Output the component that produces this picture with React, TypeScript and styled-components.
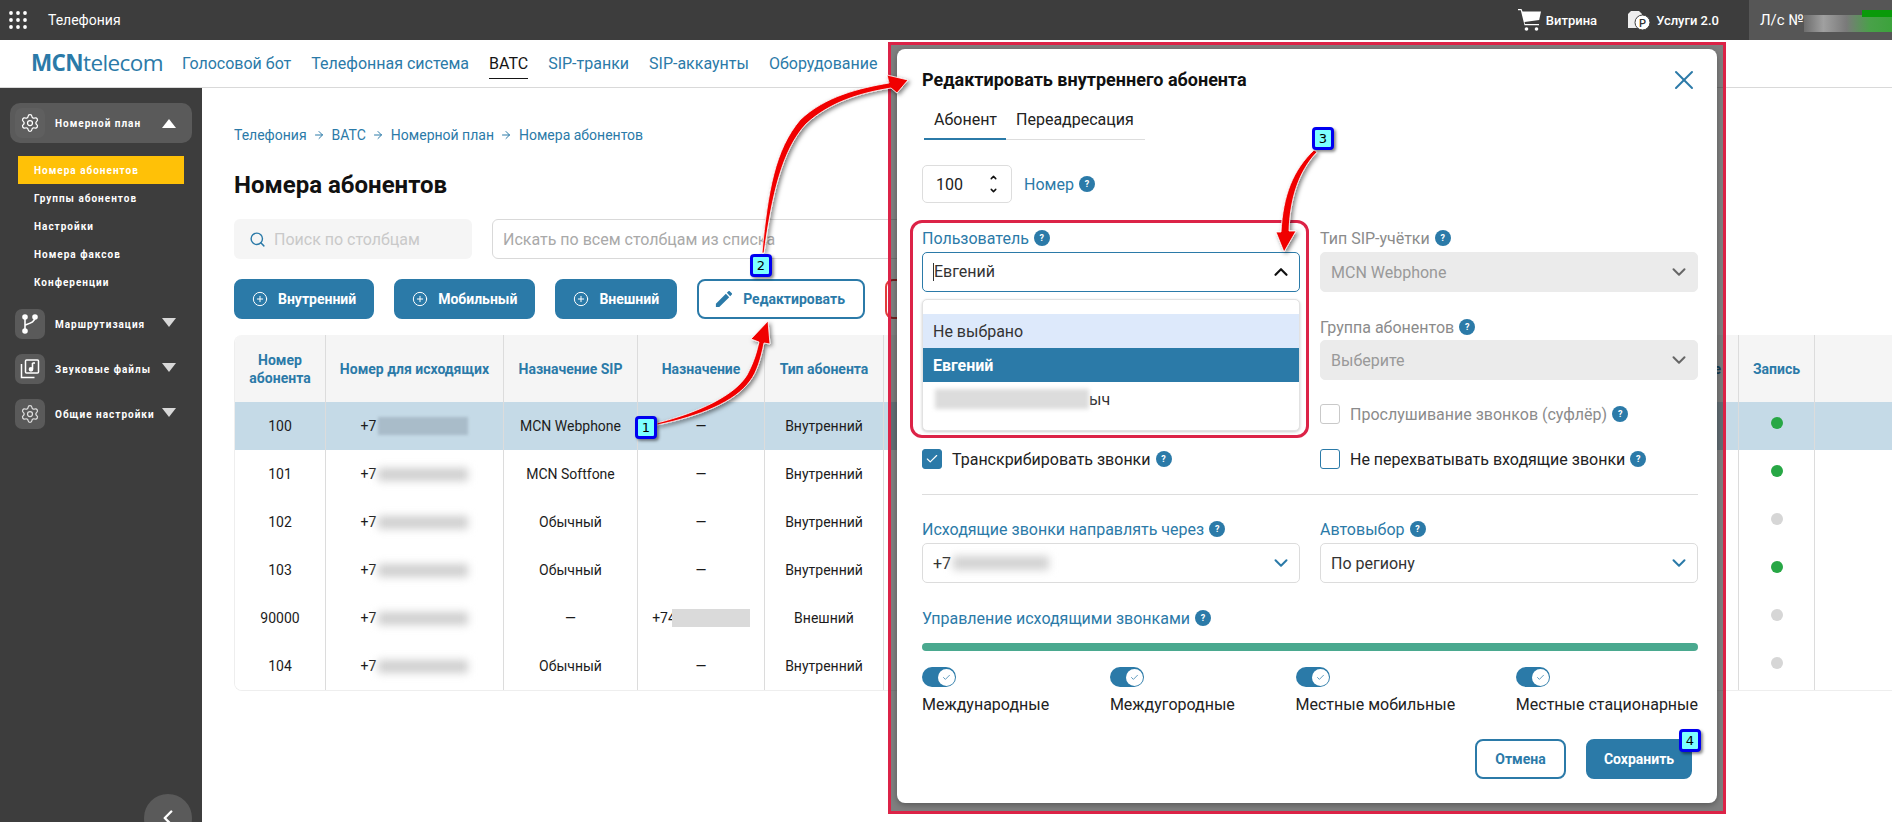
import React from "react";
import styled, { createGlobalStyle } from "styled-components";
import { ArrowRight, Check, ChevronDown, ChevronLeft, ChevronUp, CirclePlus, Search, Settings, X } from "lucide-react";

const BLUE = "#2b7aa8";
const COLS = "91px 178px 134px 127px 119px 855px 76px 1fr";

const Global = createGlobalStyle`
  html, body { margin: 0; padding: 0; background: #fff; overflow: hidden; }
  * { box-sizing: border-box; }
  body { font-family: Roboto, "Liberation Sans", sans-serif; color: #1c1c1c; }
`;

const Page = styled.div`
  position: relative; width: 1892px; height: 822px; overflow: hidden;
  display: flex; flex-direction: column;
`;
const TopBar = styled.header`
  height: 40px; background: #3d3d3d; color: #fff; display: flex; align-items: center; flex: none;
`;
const AppGrid = styled.svg`margin: 0 21px 0 9px; display: block;`;
const AppTitle = styled.span`font-size: 14px; margin-right: auto;`;
const TopLink = styled.span`
  display: flex; align-items: center; gap: 5px; font-size: 13px; font-weight: 500; margin-right: 30px;
`;
const Account = styled.div`
  width: 143px; flex: none; height: 40px; background: #565656; display: flex; align-items: center;
  padding-left: 11px; font-size: 15px; gap: 0;
`;
const AccountBlur = styled.span`
  position: relative; display: block; flex: 1; height: 17px; margin-top: 7px;
  background: linear-gradient(90deg,#6d6d6d,#a0a0a0 22%,#7a7a7a 48%,#49a149 75%,#3ca33c);
  &::before { content: ""; position: absolute; left: 58px; right: 0; top: -5px; height: 7px; background: #0a9a0a; }
`;
const NavBar = styled.nav`
  height: 48px; flex: none; display: flex; align-items: flex-start; gap: 20px; padding: 14px 0 0 31px;
  border-bottom: 1px solid #d9d9d9; background: #fff;
`;
const Logo = styled.div`
  width: 131px; margin-top: -5px; font-family: "Open Sans", sans-serif; font-size: 22.5px; line-height: 28px; color: ${BLUE};
  letter-spacing: -0.6px; white-space: nowrap;
  b { font-weight: 700; } 
`;
const NavItem = styled.span<{ $active?: boolean }>`
  font-size: 16px; line-height: 20px; padding-bottom: 4px; white-space: nowrap;
  color: ${p => (p.$active ? "#151515" : BLUE)};
  border-bottom: 1px solid ${p => (p.$active ? "#151515" : "transparent")};
`;
const Content = styled.div`flex: 1; display: flex; min-height: 0;`;
const Sidebar = styled.aside`
  position: relative; width: 202px; flex: none; background: #3d3d3d; padding: 15px 10px 0;
  display: flex; flex-direction: column; color: #fff;
`;
const MenuGroup = styled.div<{ $open?: boolean }>`
  display: flex; align-items: center; height: ${p => (p.$open ? "40px" : "30px")}; padding-left: 5px; border-radius: 10px;
  background: ${p => (p.$open ? "#5a5a5a" : "transparent")}; margin-bottom: ${p => (p.$open ? "13px" : "15px")};
`;
const IconBox = styled.span<{ $open?: boolean }>`
  width: 30px; height: 30px; flex: none; border-radius: 7px; display: flex; align-items: center; justify-content: center;
  background: ${p => (p.$open ? "#5f5f5f" : "#5a5a5a")};
`;
const MenuText = styled.span`
  margin-left: 10px; flex: 1; font-size: 10px; font-weight: 700; letter-spacing: 1px; white-space: nowrap; line-height: 14px; padding-top: 2px;
`;
const Triangle = styled.span<{ $up?: boolean }>`
  width: 0; height: 0; margin-right: 16px; flex: none;
  border-left: 7px solid transparent; border-right: 7px solid transparent;
  ${p => (p.$up ? "border-bottom: 9px solid #fff;" : "border-top: 9px solid #d8d8d8; margin-top: -4px;")}
`;
const SubList = styled.div`margin: 0 8px 13px; display: flex; flex-direction: column;`;
const SubItem = styled.div<{ $active?: boolean }>`
  height: 28px; display: flex; align-items: center; padding-left: 16px; font-size: 10px; font-weight: 700; letter-spacing: 1px;
  background: ${p => (p.$active ? "#ffc107" : "transparent")};
`;
const Collapse = styled.div`
  position: absolute; left: 144px; top: 706px; width: 48px; height: 48px; border-radius: 50%; background: #5a5a5a;
  display: flex; align-items: center; justify-content: center;
`;
const Main = styled.main`flex: 1; min-width: 0; padding: 37px 0 0 32px;`;
const Crumbs = styled.div`display: flex; align-items: center; font-size: 14px; line-height: 20px; color: ${BLUE}; gap: 6.5px;`;
const Title = styled.h1`margin: 26px 0 20px; font-size: 24px; line-height: 28px; font-weight: 700; color: #111;`;
const SearchRow = styled.div`display: flex; gap: 20px; height: 40px; margin-bottom: 20px;`;
const ColumnSearch = styled.div`
  width: 238px; background: #f5f5f5; border-radius: 6px; display: flex; align-items: center; padding-left: 15px; gap: 8px;
  color: #c9c9c9; font-size: 16px;
`;
const ListSearch = styled.div`
  width: 1200px; border: 1px solid #d9d9d9; border-radius: 6px; display: flex; align-items: center; padding-left: 10px;
  color: #a9a9a9; font-size: 16px;
`;
const ButtonRow = styled.div`display: flex; gap: 20px; height: 40px; margin-bottom: 16px;`;
const ActionButton = styled.button<{ $variant?: "outline" | "danger" }>`
  height: 40px; border-radius: 8px; display: flex; align-items: center; gap: 10px; padding: 0 ${p => (p.$variant ? "18px" : "16px")} 0 16px;
  font: 700 14px Roboto, sans-serif; cursor: pointer;
  background: ${p => (p.$variant ? "#fff" : BLUE)};
  color: ${p => (p.$variant === "danger" ? "#e23b3b" : p.$variant ? BLUE : "#fff")};
  border: 2px solid ${p => (p.$variant === "danger" ? "#e23b3b" : BLUE)};
`;
const Table = styled.div`border-bottom: 1px solid #eee; border-left: 1px solid #eee; border-radius: 8px 0 0 8px; overflow: hidden;`;
const Row = styled.div<{ $head?: boolean; $selected?: boolean }>`
  display: grid; grid-template-columns: ${COLS}; height: ${p => (p.$head ? "67px" : "48px")};
  background: ${p => (p.$head ? "#f5f5f5" : p.$selected ? "#c5dae7" : "#fff")};
  font-size: 14px;
  font-weight: ${p => (p.$head ? 700 : 400)};
  color: ${p => (p.$head ? BLUE : "#1c1c1c")};
`;
const Cell = styled.div<{ $end?: boolean }>`
  display: flex; align-items: center; justify-content: ${p => (p.$end ? "flex-end" : "center")}; text-align: center;
  line-height: 18px; border-right: 1px solid #dcdcdc; padding-right: ${p => (p.$end ? "17px" : 0)};
  white-space: pre-line;
  &:last-child { border-right: 0; }
`;
const Blur = styled.span<{ $w: number; $h: number; $tone?: string; $soft?: number }>`
  display: inline-block; flex: none; width: ${p => p.$w}px; height: ${p => p.$h}px; background: ${p => p.$tone ?? "#d0d0d0"};
  filter: blur(${p => p.$soft ?? 4}px); margin-left: 2px;
`;
const Hard = styled.span<{ $w: number; $h: number; $tone: string }>`
  display: inline-block; flex: none; width: ${p => p.$w}px; height: ${p => p.$h}px; background: ${p => p.$tone}; margin-left: -4px;
`;
const Dot = styled.span<{ $on?: boolean }>`
  width: 12px; height: 12px; border-radius: 50%; margin-bottom: 6px; background: ${p => (p.$on ? "#27a745" : "#d6d6d6")};
`;

const Backdrop = styled.div`
  position: absolute; left: 888px; top: 42px; width: 838px; height: 772px; border: 3px solid #dc2347;
  background: rgba(0,0,0,.5); padding: 4px 5px 8px 6px;
`;
const Modal = styled.section`
  width: 820px; height: 754px; background: #fff; border-radius: 8px; padding: 20px 19px 0 25px; box-shadow: 0 2px 6px rgba(0,0,0,.3);
`;
const ModalHead = styled.div`display: flex; justify-content: space-between; align-items: center; height: 22px; margin-bottom: 9px;`;
const ModalTitle = styled.h2`margin: 0; font-size: 18px; line-height: 22px; font-weight: 700; color: #111;`;
const CloseIcon = styled(X)`margin-right: -2px; color: ${BLUE};`;
const Tabs = styled.div`display: flex; width: 221px; margin-left: 2px; height: 40px; border-bottom: 1px solid #ddd; margin-bottom: 25px;`;
const Tab = styled.div<{ $active?: boolean }>`
  height: 40px; padding: 0 9px 0 10px; font-size: 16px; display: flex; align-items: center; color: #222;
  border-bottom: 2px solid ${p => (p.$active ? BLUE : "transparent")};
`;
const NumberRow = styled.div`display: flex; align-items: center; gap: 12px; margin-bottom: 25px;`;
const NumberBox = styled.div`
  width: 90px; height: 38px; border: 1px solid #ddd; border-radius: 5px; display: flex; align-items: center; justify-content: space-between;
  padding: 0 13px 0 13px; font-size: 16px;
`;
const Spin = styled.span`display: flex; flex-direction: column; gap: 4px; color: #111;`;
const Columns = styled.div`display: grid; grid-template-columns: 378px 378px; column-gap: 20px;`;
const Col = styled.div`display: flex; flex-direction: column;`;
const UserField = styled.div`
  position: relative; display: flex; flex-direction: column;
  &::after { content: ""; position: absolute; inset: -8px -9px -7px -12px; border: 3px solid #dc2347; border-radius: 12px; pointer-events: none; }
`;
const Label = styled.label<{ $muted?: boolean; $tight?: boolean; $flush?: boolean; $gapTop?: boolean }>`
  display: flex; align-items: center; gap: 5px; height: 20px; font-size: 16px;
  margin-top: ${p => (p.$gapTop ? "25px" : 0)};
  margin-bottom: ${p => (p.$flush ? 0 : p.$tight ? "3px" : "4px")};
  color: ${p => (p.$muted ? "#8b8b8b" : BLUE)};
`;
const Help = styled.span`
  width: 16px; height: 16px; flex: none; border-radius: 50%; background: ${BLUE}; color: #fff; font-size: 9px; font-weight: 700;
  display: flex; align-items: center; justify-content: center;
`;
const Select = styled.div<{ $state?: "focus" | "disabled" }>`
  height: 40px; flex: none; border-radius: 5px; display: flex; align-items: center; justify-content: space-between; padding: 0 7px 0 10px; font-size: 16px;
  border: 1px solid ${p => (p.$state === "focus" ? BLUE : p.$state === "disabled" ? "#ebebeb" : "#dcdcdc")};
  background: ${p => (p.$state === "disabled" ? "#ebebeb" : "#fff")};
  color: ${p => (p.$state === "disabled" ? "#999" : "#333")};
`;
const SelectValue = styled.span<{ $caret?: boolean }>`
  display: flex; align-items: center; ${p => (p.$caret ? "border-left: 1px solid #333; line-height: 18px;" : "")}
`;
const Dropdown = styled.div`
  margin-top: 7px; height: 132px; padding: 14px 0; border: 1px solid #e2e2e2; border-radius: 5px; background: #fff;
  box-shadow: 0 1px 3px rgba(0,0,0,.2); font-size: 16px;
`;
const Option = styled.div<{ $kind?: "hover" | "active" }>`
  height: 34px; display: flex; align-items: center; padding-left: 10px;
  background: ${p => (p.$kind === "hover" ? "#dde9fb" : p.$kind === "active" ? BLUE : "#fff")};
  color: ${p => (p.$kind === "active" ? "#fff" : "#333")}; font-weight: ${p => (p.$kind === "active" ? 700 : 400)};
`;
const CheckRow = styled.div<{ $muted?: boolean; $top: number }>`
  display: flex; align-items: center; height: 20px; margin-top: ${p => p.$top}px; font-size: 16px; color: ${p => (p.$muted ? "#8b8b8b" : "#222")};
  gap: 10px;
`;
const CheckLabel = styled.span`display: flex; align-items: center; gap: 5px;`;
const Box = styled.span<{ $kind?: "on" | "blue" }>`
  width: 20px; height: 20px; flex: none; border-radius: 3px; display: flex; align-items: center; justify-content: center; color: #fff;
  background: ${p => (p.$kind === "on" ? BLUE : "#fff")};
  border: 1px solid ${p => (p.$kind ? BLUE : "#c9c9c9")};
`;
const Divider = styled.hr`border: 0; border-top: 1px solid #ddd; margin: 25px 0 24px;`;
const Wide = styled.div`margin-top: 25px;`;
const Bar = styled.div`height: 8px; border-radius: 4px; background: #4aa98f; margin: 15px 0 16px;`;
const Toggles = styled.div`display: flex; justify-content: space-between;`;
const ToggleItem = styled.div`display: flex; flex-direction: column; gap: 8px; font-size: 16px; line-height: 20px; color: #222;`;
const Toggle = styled.span`
  width: 34px; height: 20px; border-radius: 10px; background: ${BLUE}; display: flex; align-items: center; justify-content: flex-end; padding-right: 1px;
`;
const Knob = styled.span`
  width: 17px; height: 17px; border-radius: 50%; background: #fff; color: ${BLUE}; display: flex; align-items: center; justify-content: center;
`;
const Footer = styled.div`display: flex; justify-content: flex-end; gap: 20px; margin: 24px 6px 0 0;`;
const FooterButton = styled.button<{ $primary?: boolean }>`
  width: ${p => (p.$primary ? "106px" : "91px")}; height: 40px; border-radius: 8px; font: 700 14px Roboto, sans-serif; border: 2px solid ${BLUE};
  background: ${p => (p.$primary ? BLUE : "#fff")}; color: ${p => (p.$primary ? "#fff" : BLUE)};
`;
const Arrows = styled.svg`position: absolute; inset: 0; pointer-events: none;`;
const Marker = styled.span<{ $x: number; $y: number }>`
  position: absolute; left: ${p => p.$x - 11}px; top: ${p => p.$y - 11}px; width: 22px; height: 23px;
  border: 3px solid #0000f0; border-radius: 4px; background: #7dffff; color: #000; font: 13px "DejaVu Sans", sans-serif;
  display: flex; align-items: center; justify-content: center; box-shadow: 2px 2px 3px rgba(0,0,0,.45);
`;

const rows = [
  { n: "100", sip: "MCN Webphone", dest: "—", type: "Внутренний", rec: true, sel: true },
  { n: "101", sip: "MCN Softfone", dest: "—", type: "Внутренний", rec: true },
  { n: "102", sip: "Обычный", dest: "—", type: "Внутренний", rec: false },
  { n: "103", sip: "Обычный", dest: "—", type: "Внутренний", rec: true },
  { n: "90000", sip: "—", dest: "+74", type: "Внешний", rec: false },
  { n: "104", sip: "Обычный", dest: "—", type: "Внутренний", rec: false },
];

const Q = () => <Help>?</Help>;

const BranchIcon = () => (
  <svg width="18" height="20" viewBox="0 0 18 20" fill="none" stroke="#fff" strokeWidth="1.6">
    <path d="M4 3v14M14 3c0 5-4 6-10 8" />
    <circle cx="4" cy="3" r="2" fill="#fff" /><circle cx="14" cy="3" r="2" fill="#fff" /><circle cx="4" cy="17" r="2" fill="#fff" />
  </svg>
);
const MusicIcon = () => (
  <svg width="20" height="20" viewBox="0 0 20 20" fill="none" stroke="#fff" strokeWidth="1.5">
    <rect x="5.5" y="1" width="13" height="13" rx="1" />
    <path d="M1.5 5v13.500h13" />
    <path d="M12.500 4v6" strokeWidth="1.600" /><path d="M12.500 4h2.500" strokeWidth="1.600" />
    <circle cx="11" cy="10.300" r="1.600" fill="#fff" />
  </svg>
);
const CartIcon = () => (
  <svg width="23" height="22" viewBox="0 0 23 22" fill="#fff">
    <path d="M0 0h3.500l1 2.500H23l-1.800 8.500-14.700 2 .5 2H21v1.300H6.500L2.800 1.300H0z" />
    <circle cx="8.500" cy="20" r="1.800" /><circle cx="18.500" cy="20" r="1.800" />
  </svg>
);
const ServiceIcon = () => (
  <svg width="24" height="21" viewBox="0 0 24 21">
    <path d="M4 1h8l3 3v14H1V4z" fill="#eee" />
    <circle cx="15.500" cy="12.500" r="7.500" fill="#fff" stroke="#3d3d3d" strokeWidth="1" />
    <text x="15.500" y="16.500" textAnchor="middle" fontSize="11" fontFamily="Roboto" fill="#333">P</text>
  </svg>
);
const PencilIcon = () => (
  <svg width="18" height="18" viewBox="2 2 20 20" fill={BLUE}>
    <path d="M3 17.250V21h3.750L17.810 9.940l-3.750-3.750L3 17.250zM20.710 7.040c.39-.39.39-1.020 0-1.410l-2.340-2.340c-.39-.39-1.020-.39-1.410 0l-1.830 1.830 3.750 3.750 1.830-1.830z" />
  </svg>
);

export default function App() {
  return (
    <Page>
      <Global />
      <TopBar>
        <AppGrid width="18" height="18" viewBox="0 0 18 18" fill="#fff">
          {[2, 9, 16].flatMap(y => [2, 9, 16].map(x => <circle key={`${x}-${y}`} cx={x} cy={y} r="1.900" />))}
        </AppGrid>
        <AppTitle>Телефония</AppTitle>
        <TopLink><CartIcon />Витрина</TopLink>
        <TopLink><ServiceIcon />Услуги 2.0</TopLink>
        <Account>Л/с №<AccountBlur /></Account>
      </TopBar>
      <NavBar>
        <Logo><b>MCN</b>telecom</Logo>
        <NavItem>Голосовой бот</NavItem>
        <NavItem>Телефонная система</NavItem>
        <NavItem $active>ВАТС</NavItem>
        <NavItem>SIP-транки</NavItem>
        <NavItem>SIP-аккаунты</NavItem>
        <NavItem>Оборудование</NavItem>
      </NavBar>
      <Content>
        <Sidebar>
          <MenuGroup $open>
            <IconBox $open><Settings size={20} color="#fff" strokeWidth={1.5} /></IconBox>
            <MenuText>Номерной план</MenuText>
            <Triangle $up />
          </MenuGroup>
          <SubList>
            <SubItem $active>Номера абонентов</SubItem>
            <SubItem>Группы абонентов</SubItem>
            <SubItem>Настройки</SubItem>
            <SubItem>Номера факсов</SubItem>
            <SubItem>Конференции</SubItem>
          </SubList>
          <MenuGroup><IconBox><BranchIcon /></IconBox><MenuText>Маршрутизация</MenuText><Triangle /></MenuGroup>
          <MenuGroup><IconBox><MusicIcon /></IconBox><MenuText>Звуковые файлы</MenuText><Triangle /></MenuGroup>
          <MenuGroup><IconBox><Settings size={20} color="#ddd" strokeWidth={1.5} /></IconBox><MenuText>Общие настройки</MenuText><Triangle /></MenuGroup>
          <Collapse><ChevronLeft size={26} strokeWidth={2.2} color="#fff" /></Collapse>
        </Sidebar>
        <Main>
          <Crumbs>
            Телефония<ArrowRight size={12} />ВАТС<ArrowRight size={12} />Номерной план<ArrowRight size={12} />Номера абонентов
          </Crumbs>
          <Title>Номера абонентов</Title>
          <SearchRow>
            <ColumnSearch><Search size={17} color={BLUE} />Поиск по столбцам</ColumnSearch>
            <ListSearch>Искать по всем столбцам из списка</ListSearch>
          </SearchRow>
          <ButtonRow>
            <ActionButton><CirclePlus size={16} strokeWidth={1.5} />Внутренний</ActionButton>
            <ActionButton><CirclePlus size={16} strokeWidth={1.5} />Мобильный</ActionButton>
            <ActionButton><CirclePlus size={16} strokeWidth={1.5} />Внешний</ActionButton>
            <ActionButton $variant="outline"><PencilIcon />Редактировать</ActionButton>
            <ActionButton $variant="danger">Удалить</ActionButton>
          </ButtonRow>
          <Table>
            <Row $head>
              <Cell>{"Номер\nабонента"}</Cell>
              <Cell>Номер для исходящих</Cell>
              <Cell>Назначение SIP</Cell>
              <Cell>Назначение</Cell>
              <Cell>Тип абонента</Cell>
              <Cell $end>Подключение</Cell>
              <Cell>Запись</Cell>
              <Cell />
            </Row>
            {rows.map(r => (
              <Row key={r.n} $selected={r.sel}>
                <Cell>{r.n}</Cell>
                <Cell>+7<Blur $w={90} $h={r.sel ? 18 : 13} $tone={r.sel ? "#a9bcc9" : "#cfcfcf"} $soft={r.sel ? 1.500 : 4} /></Cell>
                <Cell>{r.sip}</Cell>
                <Cell>{r.dest}{r.dest !== "—" && <Hard $w={78} $h={18} $tone="#dadada" />}</Cell>
                <Cell>{r.type}</Cell>
                <Cell />
                <Cell><Dot $on={r.rec} /></Cell>
                <Cell />
              </Row>
            ))}
          </Table>
        </Main>
      </Content>

      <Backdrop>
        <Modal>
          <ModalHead>
            <ModalTitle>Редактировать внутреннего абонента</ModalTitle>
            <CloseIcon size={32} strokeWidth={1.5} />
          </ModalHead>
          <Tabs>
            <Tab $active>Абонент</Tab>
            <Tab>Переадресация</Tab>
          </Tabs>
          <NumberRow>
            <NumberBox>100<Spin><ChevronUp size={9} strokeWidth={4} /><ChevronDown size={9} strokeWidth={4} /></Spin></NumberBox>
            <Label as="span" $flush>Номер <Q /></Label>
          </NumberRow>
          <Columns>
            <Col>
              <UserField>
                <Label>Пользователь <Q /></Label>
                <Select $state="focus">
                  <SelectValue $caret>Евгений</SelectValue>
                  <ChevronUp size={22} strokeWidth={2.4} color="#111" />
                </Select>
                <Dropdown>
                  <Option $kind="hover">Не выбрано</Option>
                  <Option $kind="active">Евгений</Option>
                  <Option><Blur $w={154} $h={20} $tone="#dcdcdc" $soft={2} />ыч</Option>
                </Dropdown>
              </UserField>
              <CheckRow $top={18}>
                <Box $kind="on"><Check size={14} strokeWidth={2} /></Box>
                <CheckLabel>Транскрибировать звонки <Q /></CheckLabel>
              </CheckRow>
            </Col>
            <Col>
              <Label $muted>Тип SIP-учётки <Q /></Label>
              <Select $state="disabled">MCN Webphone<ChevronDown size={22} strokeWidth={2.2} color="#666" /></Select>
              <Label $muted $tight $gapTop>Группа абонентов <Q /></Label>
              <Select $state="disabled">Выберите<ChevronDown size={22} strokeWidth={2.2} color="#666" /></Select>
              <CheckRow $muted $top={24}>
                <Box />
                <CheckLabel>Прослушивание звонков (суфлёр) <Q /></CheckLabel>
              </CheckRow>
              <CheckRow $top={25}>
                <Box $kind="blue" />
                <CheckLabel>Не перехватывать входящие звонки <Q /></CheckLabel>
              </CheckRow>
            </Col>
          </Columns>
          <Divider />
          <Columns>
            <Col>
              <Label>Исходящие звонки направлять через <Q /></Label>
              <Select><SelectValue>+7<Blur $w={96} $h={14} $tone="#d2d2d2" $soft={4} /></SelectValue><ChevronDown size={22} strokeWidth={2.2} color={BLUE} /></Select>
            </Col>
            <Col>
              <Label>Автовыбор <Q /></Label>
              <Select>По региону<ChevronDown size={22} strokeWidth={2.2} color={BLUE} /></Select>
            </Col>
          </Columns>
          <Wide>
            <Label>Управление исходящими звонками <Q /></Label>
            <Bar />
            <Toggles>
              {["Международные", "Междугородные", "Местные мобильные", "Местные стационарные"].map(t => (
                <ToggleItem key={t}>
                  <Toggle><Knob><Check size={9} strokeWidth={2} /></Knob></Toggle>
                  {t}
                </ToggleItem>
              ))}
            </Toggles>
          </Wide>
          <Footer>
            <FooterButton>Отмена</FooterButton>
            <FooterButton $primary>Сохранить</FooterButton>
          </Footer>
        </Modal>
      </Backdrop>

      <Arrows width="1892" height="822" viewBox="0 0 1892 822">
        <defs>
          <filter id="sh" x="-20%" y="-20%" width="140%" height="140%">
            <feDropShadow dx="2" dy="2" stdDeviation="2" floodColor="#000" floodOpacity=".5" />
          </filter>
        </defs>
        <g fill="#f00000" stroke="#fff" strokeWidth="0.800" filter="url(#sh)">
          <path d="M657 423C700 412 735 395 747 375C755 360 757 350 759 342L751 339L768 321L770 344L764 343C761 358 757 372 750 381C735 402 700 416 657 425Z" />
          <path d="M762 253C768 190 775 150 800 120C825 96 860 88 889 83L887 75L908 80L897 93L891 88C860 93 830 102 806 124C782 150 772 195 764 253Z" />
          <path d="M1314 150C1293 170 1283 195 1281 232L1276 232L1284 252L1296 231L1289 231C1290 200 1298 172 1317 152Z" />
        </g>
      </Arrows>
      <Marker $x={646} $y={427}>1</Marker>
      <Marker $x={761} $y={265}>2</Marker>
      <Marker $x={1323} $y={138}>3</Marker>
      <Marker $x={1690} $y={740}>4</Marker>
    </Page>
  );
}
